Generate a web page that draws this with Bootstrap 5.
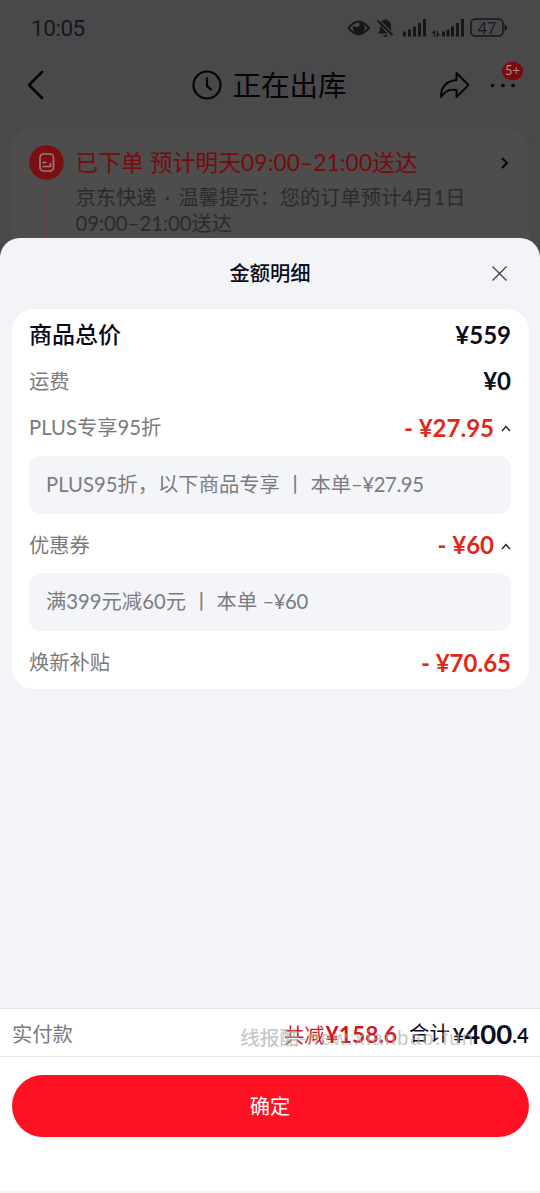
<!DOCTYPE html>
<html lang="zh-CN">
<head>
<meta charset="utf-8">
<meta name="viewport" content="width=device-width, initial-scale=1">
<title>金额明细</title>
<link href="https://cdn.jsdelivr.net/npm/bootstrap@5.3.0/dist/css/bootstrap.min.css" rel="stylesheet">
<style>
body{width:540px;height:1193px;overflow:hidden;background:#49494b;font-family:Lato,"Noto Sans CJK SC",sans-serif;font-size:20.3px;line-height:1.25;color:#0a0c1a;white-space:nowrap}
svg{display:block;flex:none}
.screen{height:1193px}
.status-row{height:55px;padding:0 32px 0 31px;color:#17171a}
.clock{font-family:Roboto,sans-serif;font-size:22.5px;letter-spacing:-.45px;padding-top:1px}
.title-row{height:73px;padding:0 24px 13px 26px;color:#050506}
.title-group{gap:10px;padding-left:54px}
.more-btn{margin-left:19px}
.page-title{font-size:28.5px;padding-top:1px}
.order-box{height:130px;margin:0 11px;padding:17px 18px 0;border-radius:22px 22px 0 0;background:#4d4d4d}
.order-line{width:1px;background:#663f41;margin-top:7px}
.order-text{padding-left:11.5px}
.order-head{font-size:22.7px;line-height:36px;color:#790b0b;letter-spacing:.12px}
.order-note{line-height:25.5px;color:#2b2b2b;padding-top:4px}
.dot-gap{margin:0 3px}
.sheet{margin-top:-20px;border-radius:20px 20px 0 0;background:#f3f4f8}
.sheet-head{height:71px}
.sheet-title{font-weight:500;padding-top:1px}
.sheet-close{right:32px;top:27px}
.price-card{margin:0 11.5px;height:380px;padding:2px 17.5px 0;border-radius:22px;background:#fff}
.price-row{height:46.5px}
.price-label{color:#7a7a7c;padding-top:1px}
.total-label{font-size:23px;font-weight:500}
.price-num{font-size:24px;font-weight:700;padding-top:1px}
.fold-mark{margin-top:2px}
.red-num{color:#df2818}
.note-box{height:58px;border-radius:12px;background:#f4f5f9;color:#7c7c80;padding-left:17px;margin:5px 0 8px}
.note-box .tight{letter-spacing:-.4px}
.pay-row{height:49px;border-top:1px solid #e4e4e8;border-bottom:1px solid #e8e8ea;background:#fff;padding:3px 11.5px 0 12px}
.saved{color:#d31522}
.saved .price-num{font-size:22.8px;margin-left:1px}
.sum-label{margin:0 3px 0 12px}
.sum-small{font-size:20px;padding-top:3px}
.sum-big{font-size:27.5px;line-height:1}
.wm{left:240px;top:17px;color:rgba(175,175,175,.7);font-family:"Liberation Sans","Noto Sans CJK SC",sans-serif;font-size:19.8px;font-weight:500}
.wm span{letter-spacing:1.6px}
.foot{height:136px;background:#fff;border-bottom:2px solid #f3f4f8;padding:18px 11.5px}
.ok-btn,.ok-btn:hover{height:62px;font-size:20.3px;background:#ff1124;color:#fff;border:0}
.count-badge{left:12px;top:-20px;width:21px;height:18px;border-radius:9px;background:#7c0a0c;color:#a98d8d;font-size:13px;line-height:17px}
</style>
</head>
<body>
<div class="screen d-flex flex-column">
  <div class="status-row d-flex align-items-center justify-content-between">
    <span class="clock">10:05</span>
    <svg width="162" height="24" viewBox="346 15.500 162 24" fill="#17171a">
      <path d="M348.500 27.300Q358.500 14.500 369 27.300Q358.500 40 348.500 27.300Z" fill="none" stroke="#17171a" stroke-width="2"/>
      <path d="M358.800 21.500a6 6 0 1 1-5.500 4l3.500 1.500 3-2z"/>
      <path d="M378 33q2-2 2-5v-3q0-4 4-5.500q1.500-1.500 3 0q4 1.500 4 5.500v3q0 3 2 5zM383 34.500h5q-1 2-2.500 2t-2.500-2z"/>
      <path d="M377 19.500l16 15.500" stroke="#49494b" stroke-width="4"/><path d="M377.500 20l15 14.500" stroke="#17171a" stroke-width="2"/>
      <path d="M403 31h3v5h-3zM408 29h3v7h-3zM413 26h3v10h-3zM418 22.500h3V36h-3zM423 18.500h3V36h-3zM442 31h3v5h-3zM446.500 29h3v7h-3zM451 26h3v10h-3zM456 22.500h3V36h-3zM461 18.500h3V36h-3z"/>
      <path d="M432.500 32.500l1.800-1.500v5M437.300 30.500v5l2-2" fill="none" stroke="#17171a" stroke-width="1.400"/>
      <rect x="471" y="18.500" width="32" height="17" rx="4.500" fill="none" stroke="#17171a" stroke-width="1.500"/>
      <path d="M504.500 24q2.500 0 2.500 3t-2.500 3z"/>
      <text x="487" y="33" text-anchor="middle" font-family="Open Sans" font-size="16" font-weight="500">47</text>
    </svg>
  </div>
  <div class="title-row d-flex align-items-center">
    <svg width="20" height="30" fill="none" stroke="#050506" stroke-width="2.500" stroke-linecap="round" stroke-linejoin="round"><path d="M16 2L3 15l13 13"/></svg>
    <div class="title-group d-flex align-items-center mx-auto">
      <svg width="30" height="30" fill="none" stroke="#050506" stroke-width="2.200" stroke-linecap="round"><circle cx="15" cy="15" r="13.500"/><path d="M15 8v8l4 3.500"/></svg>
      <span class="page-title">正在出库</span>
    </div>
    <svg width="32" height="30" fill="none" stroke="#050506" stroke-width="1.900" stroke-linejoin="round"><path d="M17.500 3L29.500 15L17.500 27V20Q8 18 2 27Q2 11.500 17.500 10Z"/></svg>
    <div class="more-btn position-relative">
      <svg width="26" height="6" fill="#050506"><circle cx="2.500" cy="3.500" r="1.800"/><circle cx="13" cy="3.500" r="1.800"/><circle cx="23" cy="3.500" r="1.800"/></svg>
      <span class="count-badge position-absolute text-center">5+</span>
    </div>
  </div>
  <div class="order-box d-flex flex-shrink-0">
    <div class="d-flex flex-column align-items-center">
      <svg width="35" height="35"><circle cx="17.500" cy="17.500" r="17.300" fill="#7b1013"/><g fill="none" stroke="#a77476" stroke-width="1.700" stroke-linecap="round"><rect x="11" y="9" width="13.500" height="17" rx="3.500"/><path d="M14 17.500h3M14 21.500h7.500v-3"/></g></svg>
      <div class="order-line flex-grow-1"></div>
    </div>
    <div class="order-text flex-grow-1">
      <div class="order-head d-flex align-items-center justify-content-between"><span>已下单 预计明天09:00–21:00送达</span>
        <svg width="12" height="14" fill="none" stroke="#050506" stroke-width="2"><path d="M3 2l5 5-5 5"/></svg></div>
      <div class="order-note">京东快递<span class="dot-gap"> · </span>温馨提示：您的订单预计4月1日<br>09:00–21:00送达</div>
    </div>
  </div>
  <div class="sheet d-flex flex-column flex-grow-1 position-relative">
    <div class="sheet-head d-flex align-items-center justify-content-center flex-shrink-0">
      <span class="sheet-title">金额明细</span>
      <svg class="sheet-close position-absolute" width="17" height="17" stroke="#444" stroke-width="1.400"><path d="M1.500 1.500l14 14M15.500 1.500l-14 14"/></svg>
    </div>
    <div class="price-card">
      <div class="price-row d-flex align-items-center justify-content-between"><span class="total-label">商品总价</span><span class="price-num">¥559</span></div>
      <div class="price-row d-flex align-items-center justify-content-between"><span class="price-label">运费</span><span class="price-num">¥0</span></div>
      <div class="price-row d-flex align-items-center"><span class="price-label me-auto">PLUS专享95折</span><span class="price-num red-num">- ¥27.95</span><svg class="fold-mark" width="17" height="10" fill="none" stroke="#222" stroke-width="1.400"><path d="M8 8l4-4.500L16 8"/></svg></div>
      <div class="note-box d-flex align-items-center"><span>PLUS95折，以下商品专享 丨 本单<span class="tight">–¥27.95</span></span></div>
      <div class="price-row d-flex align-items-center"><span class="price-label me-auto">优惠券</span><span class="price-num red-num">- ¥60</span><svg class="fold-mark" width="17" height="10" fill="none" stroke="#222" stroke-width="1.400"><path d="M8 8l4-4.500L16 8"/></svg></div>
      <div class="note-box d-flex align-items-center"><span>满399元减60元 丨 本单 <span class="tight">–¥60</span></span></div>
      <div class="price-row d-flex align-items-center justify-content-between"><span class="price-label">焕新补贴</span><span class="price-num red-num">- ¥70.65</span></div>
    </div>
  </div>
  <div class="pay-row d-flex align-items-center flex-shrink-0 position-relative">
    <span class="price-label me-auto">实付款</span>
    <span class="saved">共减<b class="price-num">¥158.6</b></span>
    <span class="sum-label">合计</span><b class="sum-small">¥</b><b class="sum-big">400</b><b class="sum-small">.4</b>
    <span class="wm position-absolute">线报酷<span>-new.xianbao.fun</span></span>
  </div>
  <div class="foot flex-shrink-0"><button class="ok-btn btn w-100 rounded-pill" type="button">确定</button></div>
</div>
<script src="https://cdn.jsdelivr.net/npm/bootstrap@5.3.0/dist/js/bootstrap.bundle.min.js"></script>
</body>
</html>
